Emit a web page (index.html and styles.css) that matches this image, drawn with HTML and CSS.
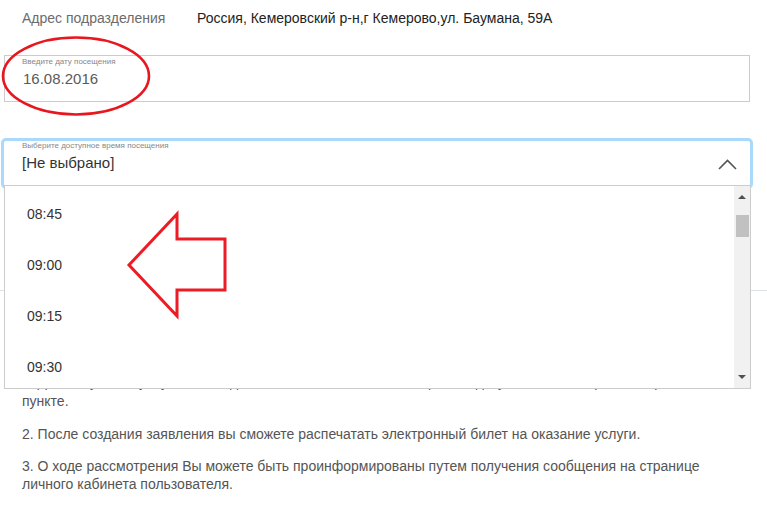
FILE: index.html
```html
<!DOCTYPE html>
<html lang="ru">
<head>
<meta charset="utf-8">
<title>Запись на прием</title>
<link rel="stylesheet" href="styles.css">
</head>
<body>
<div class="page">
  <div class="addr-row">
    <span class="addr-label">Адрес подразделения</span>
    <span class="addr-value">Россия, Кемеровский р-н,г Кемерово,ул. Баумана, 59А</span>
  </div>

  <div class="date-field">
    <div class="field-label">Введите дату посещения</div>
    <div class="date-value">16.08.2016</div>
  </div>

  <div class="time-ring">
    <div class="time-select">
      <div class="time-text">
        <div class="field-label">Выберите доступное время посещения</div>
        <div class="time-value">[Не выбрано]</div>
      </div>
      <svg class="chevron" width="19" height="11" viewBox="0 0 19 11">
        <polyline points="1,10 9.5,1.5 18,10" fill="none" stroke="#555" stroke-width="1.6"/>
      </svg>
    </div>
    <div class="dropdown">
      <ul class="options">
        <li class="option">08:45</li>
        <li class="option">09:00</li>
        <li class="option">09:15</li>
        <li class="option">09:30</li>
      </ul>
      <div class="scrollbar">
        <div class="sb-up"></div>
        <div class="sb-thumb"></div>
        <div class="sb-down"></div>
      </div>
    </div>
  </div>

  <div class="divider"></div>

  <div class="notes">
    <p class="note note-first">1. Для получения услуги необходимо явиться в назначенное время с документом в выбранном приемном пункте.</p>
    <p class="note">2. После создания заявления вы сможете распечатать электронный билет на оказание услуги.</p>
    <p class="note">3. О ходе рассмотрения Вы можете быть проинформированы путем получения сообщения на странице личного кабинета пользователя.</p>
  </div>
</div>

<svg class="marks" width="767" height="520" viewBox="0 0 767 520">
  <ellipse cx="76" cy="76" rx="73" ry="38.5" fill="none" stroke="#e8161e" stroke-width="2.6"/>
  <polygon points="129,265 177,214 177,239 225,239 225,290 177,290 177,316" fill="none" stroke="#ed1c24" stroke-width="3"/>
</svg>
</body>
</html>
```

FILE: styles.css
```css
* { box-sizing: border-box; }

html, body {
  margin: 0;
  padding: 0;
  background: #fff;
}

body {
  position: relative;
  width: 767px;
  height: 520px;
  overflow: hidden;
  font-family: "Liberation Sans", Arial, sans-serif;
  font-size: 14px;
  color: #333;
}

.page {
  padding: 0;
}

.addr-row {
  display: flex;
  padding: 9px 0 0 22px;
  line-height: 18px;
}

.addr-label {
  width: 175px;
  color: #6b6b6b;
}

.addr-value {
  color: #222;
}

.date-field {
  margin: 28px 17px 0 4px;
  height: 47px;
  border: 1px solid #ccc;
  padding: 1px 0 0 17px;
}

.field-label {
  font-size: 8px;
  line-height: 10px;
  color: #888;
}

.date-value {
  margin-top: 3px;
  padding-left: 1px;
  font-size: 15px;
  line-height: 18px;
  color: #5a5a5a;
}

.time-ring {
  position: relative;
  margin: 36px 14px 0 1px;
  border: 3px solid #a9dafc;
  border-radius: 5px;
}

.time-select {
  display: flex;
  justify-content: space-between;
  align-items: flex-start;
  height: 45px;
  border-bottom: 1px solid #ccc;
  padding: 0 13px 0 18px;
}

.time-value {
  margin-top: 3px;
  font-size: 15px;
  line-height: 18px;
  color: #333;
}

.chevron {
  margin-top: 18px;
  display: block;
}

.dropdown {
  position: absolute;
  top: 45px;
  left: 0;
  width: 747px;
  height: 203px;
  background: #fff;
  border: 1px solid #ccc;
  border-top: none;
  overflow: hidden;
  z-index: 5;
}

.options {
  list-style: none;
  margin: 0;
  padding: 3px 0 0 22px;
}

.option {
  height: 51px;
  line-height: 51px;
  font-size: 14px;
  color: #333;
}

.scrollbar {
  position: absolute;
  top: 0;
  right: 0;
  bottom: 0;
  width: 16px;
  background: #f1f1f1;
}

.sb-up,
.sb-down {
  position: absolute;
  left: 4px;
  width: 0;
  height: 0;
  border-left: 4px solid transparent;
  border-right: 4px solid transparent;
}

.sb-up {
  top: 9px;
  border-bottom: 4px solid #505050;
}

.sb-down {
  bottom: 9px;
  border-top: 4px solid #505050;
}

.sb-thumb {
  position: absolute;
  top: 29px;
  left: 2px;
  width: 13px;
  height: 22px;
  background: #c1c1c1;
}

.divider {
  margin-top: 101px;
  height: 1px;
  background: #dde2e6;
}

.notes {
  margin-top: 82px;
  padding-left: 22px;
  width: 727px;
}

.note {
  margin: 0 0 14px;
  line-height: 18px;
  color: #555;
}

.note-first {
  line-height: 19px;
}

.marks {
  position: absolute;
  top: 0;
  left: 0;
  z-index: 10;
  pointer-events: none;
}
```
